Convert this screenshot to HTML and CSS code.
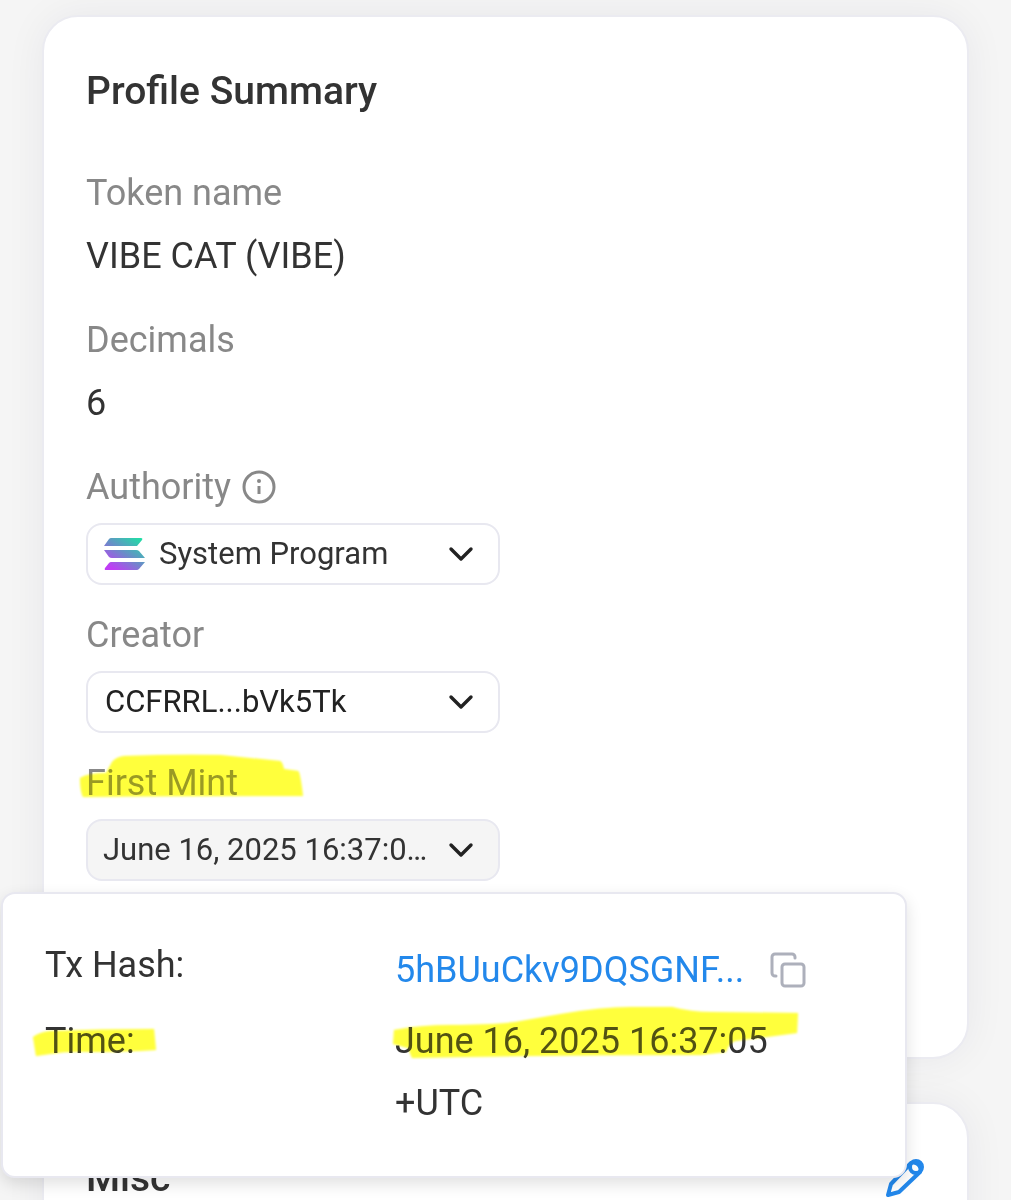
FILE: index.html
```html
<!DOCTYPE html>
<html lang="en">
<head>
<meta charset="utf-8">
<meta name="viewport" content="width=device-width, initial-scale=1">
<title>VIBE CAT (VIBE)</title>
<link rel="stylesheet" href="styles.css">
</head>
<body>
<svg class="defs" aria-hidden="true">
  <symbol id="chevron" viewBox="0 0 26 16"><path d="M3 3 13 13 23 3" fill="none" stroke="currentColor" stroke-width="3.4" stroke-linecap="round" stroke-linejoin="round"/></symbol>
  <symbol id="stroke-mint" viewBox="0 0 228 46"><path d="M2 25Q10 20 28 20L34 9Q38 4 46 3Q100 1 142 2L202 8Q204 8 206 16L220 18Q222 18 225 43Q120 43 5 44Q2 38 2 25Z"/></symbol>
  <symbol id="stroke-time" viewBox="0 0 126 32"><path d="M1 10Q8 5 18 4Q70 2 122 2L124 23Q90 25 60 25Q36 24 18 27L4 29Z"/></symbol>
  <symbol id="stroke-date" viewBox="0 0 410 56"><path d="M3 25Q30 20 60 20Q100 20 124 17L170 9Q210 2 240 2L281 2Q300 7 320 7L407 8L406 28L344 36Q338 38 335 47L309 50Q160 50 21 53L17 43L2 39Z"/></symbol>
</svg>
<main class="page">
  <section class="card">
    <h2 class="card-title">Profile Summary</h2>
    <div class="fields">
      <div class="field">
        <div class="label">Token name</div>
        <div class="value">VIBE CAT (VIBE)</div>
      </div>
      <div class="field">
        <div class="label">Decimals</div>
        <div class="value">6</div>
      </div>
      <div class="field field-picker">
        <div class="label" id="authority">Authority
          <svg class="info" viewBox="0 0 34 34" role="img" aria-label="Info"><circle cx="17" cy="17" r="15" fill="none" stroke="currentColor" stroke-width="3"/><path d="M17 16v8" stroke="currentColor" stroke-width="3"/><circle cx="17" cy="11" r="2" fill="currentColor"/></svg>
        </div>
        <button class="picker" type="button" aria-haspopup="true" aria-labelledby="authority authority-value">
          <svg class="solana" viewBox="0 0 42 34" aria-hidden="true">
            <defs><linearGradient id="sol" gradientUnits="userSpaceOnUse" x1="36" y1="0" x2="12" y2="36"><stop offset="0" stop-color="#1fdfa5"/><stop offset=".5" stop-color="#6a8cc8"/><stop offset=".95" stop-color="#c03cf5"/></linearGradient></defs>
            <path fill="url(#sol)" d="M8 1H38Q40 1 39 3L34 9H1L6 2Q7 1 8 1ZM1 13H33Q35 13 36 14L42 21H9Q7 21 6 20ZM8 25H42L36 32Q35 33 34 33H3Q1 33 2 31L6 26Q7 25 8 25Z"/>
          </svg>
          <span class="picker-text" id="authority-value">System Program</span>
          <svg class="chevron" aria-hidden="true"><use href="#chevron"/></svg>
        </button>
      </div>
      <div class="field field-picker">
        <div class="label" id="creator">Creator</div>
        <button class="picker" type="button" aria-haspopup="true" aria-labelledby="creator creator-value">
          <span class="picker-text picker-address" id="creator-value">CCFRRL...bVk5Tk</span>
          <svg class="chevron" aria-hidden="true"><use href="#chevron"/></svg>
        </button>
      </div>
      <div class="field field-picker">
        <div class="label" id="mint">First Mint
          <svg class="marker marker-mint" aria-hidden="true"><use href="#stroke-mint"/></svg>
          <svg class="marker marker-mint marker-tint" aria-hidden="true"><use href="#stroke-mint"/></svg>
        </div>
        <button class="picker picker-open" type="button" aria-haspopup="true" aria-expanded="true" aria-labelledby="mint mint-value">
          <span class="picker-text" id="mint-value">June 16, 2025 16:37:05 +UTC</span>
          <svg class="chevron" aria-hidden="true"><use href="#chevron"/></svg>
        </button>
        <div class="popover">
          <dl class="details">
            <dt>Tx Hash:</dt>
            <dd class="hash">
              <a class="hash-link" href="#tx">5hBUuCkv9DQSGNF...</a>
              <button class="copy" type="button" aria-label="Copy hash">
                <svg viewBox="0 0 36 36" aria-hidden="true"><rect x="12" y="12" width="22" height="22" rx="3"/><path d="M6 24H5a3 3 0 0 1-3-3V5a3 3 0 0 1 3-3h17a3 3 0 0 1 3 3v1"/></svg>
              </button>
            </dd>
            <dt>Time:
              <svg class="marker marker-time" aria-hidden="true"><use href="#stroke-time"/></svg>
              <svg class="marker marker-time marker-tint" aria-hidden="true"><use href="#stroke-time"/></svg>
            </dt>
            <dd>June 16, 2025 16:37:05 +UTC
              <svg class="marker marker-date" aria-hidden="true"><use href="#stroke-date"/></svg>
              <svg class="marker marker-date marker-tint" aria-hidden="true"><use href="#stroke-date"/></svg>
            </dd>
          </dl>
        </div>
      </div>
    </div>
  </section>
  <section class="card">
    <header class="card-header">
      <h2 class="card-title">Misc</h2>
      <button class="edit" type="button" aria-label="Edit">
        <svg viewBox="0 0 40 40" aria-hidden="true"><path d="M3 37 6 26 26 5a7 7 0 0 1 9 9L14 34Z"/><circle cx="31" cy="9" r="6"/></svg>
      </button>
    </header>
  </section>
</main>
</body>
</html>
```
FILE: styles.css
```css
* {
  box-sizing: border-box;
}

body {
  margin: 0;
  background: #f5f5f5;
  color: #333;
  font-family: Roboto, "Liberation Sans", sans-serif;
  font-size: 36px;
  line-height: 44px;
}

.defs {
  position: absolute;
  width: 0;
  height: 0;
}

.page {
  display: flex;
  flex-direction: column;
  gap: 43px;
  height: 100vh;
  padding: 15px 42px 0;
  overflow: hidden;
}

.card {
  flex: none;
  padding: 50px 42px 176px;
  border: 2px solid #ebebf1;
  border-radius: 36px;
  background: #fff;
  box-shadow: 0 0 40px rgba(20, 20, 60, 0.06);
}

.card-title {
  margin: 0;
  font-size: 39px;
  font-weight: 500;
  line-height: 48px;
}

.card-header {
  display: flex;
  justify-content: space-between;
  align-items: center;
}

.fields {
  display: flex;
  flex-direction: column;
  gap: 40px;
  margin-top: 56px;
}

.field {
  display: flex;
  flex-direction: column;
  align-items: flex-start;
  gap: 19px;
}

.field-picker {
  position: relative;
  gap: 14px;
}

.field-picker + .field-picker {
  margin-top: -12px;
}

.label {
  position: relative;
  display: flex;
  align-items: center;
  gap: 11px;
  color: #888;
}

.info {
  width: 34px;
  height: 34px;
}

.picker {
  display: flex;
  align-items: center;
  gap: 14px;
  width: 414px;
  max-width: 100%;
  height: 62px;
  padding: 0 24px 0 15px;
  border: 2px solid #e8e8f0;
  border-radius: 16px;
  background: #fff;
  color: #333;
  font: inherit;
  font-size: 31px;
  text-align: left;
}

.picker-open {
  background: #f5f5f5;
}

.picker-text {
  flex: 1;
  min-width: 0;
  margin-right: 4px;
  overflow: hidden;
  text-overflow: ellipsis;
  white-space: nowrap;
}

.picker-address {
  padding-left: 2px;
  color: #222;
}

.solana {
  flex: none;
  width: 42px;
  height: 34px;
}

.chevron {
  flex: none;
  width: 26px;
  height: 16px;
  color: #222;
}

.popover {
  position: absolute;
  z-index: 2;
  top: calc(100% + 11px);
  right: 18px;
  left: -85px;
  padding: 40px 60px 42px 42px;
  border: 2px solid #e8e8f0;
  border-radius: 14px;
  background: #fff;
  box-shadow: 0 6px 16px rgba(0, 0, 0, 0.12);
}

.details {
  display: grid;
  grid-template-columns: 350px minmax(0, 1fr);
  row-gap: 4px;
  margin: 0;
  line-height: 62px;
}

.details dt,
.details dd {
  position: relative;
  margin: 0;
}

.details .hash {
  display: flex;
  align-items: center;
  gap: 26px;
  height: 72px;
}

.hash-link {
  color: #2388eb;
  text-decoration: none;
  white-space: nowrap;
}

.copy,
.edit {
  flex: none;
  padding: 0;
  border: 0;
  background: none;
}

.copy svg,
.edit svg {
  display: block;
  fill: none;
  stroke-linecap: round;
  stroke-linejoin: round;
  stroke-width: 3;
}

.copy svg {
  width: 36px;
  height: 36px;
  stroke: #adb0bb;
}

.edit svg {
  width: 40px;
  height: 40px;
  stroke: #2388eb;
  stroke-width: 4;
}

.marker {
  position: absolute;
  fill: #ffff3c;
  filter: blur(1px);
  mix-blend-mode: multiply;
  pointer-events: none;
}

.marker-tint {
  opacity: 0.15;
  mix-blend-mode: normal;
}

.marker-mint {
  top: -8px;
  left: -8px;
  width: 228px;
  height: 46px;
}

.marker-time {
  top: 17px;
  left: -13px;
  width: 126px;
  height: 32px;
}

.marker-date {
  top: -5px;
  left: -4px;
  width: 410px;
  height: 56px;
}
```
